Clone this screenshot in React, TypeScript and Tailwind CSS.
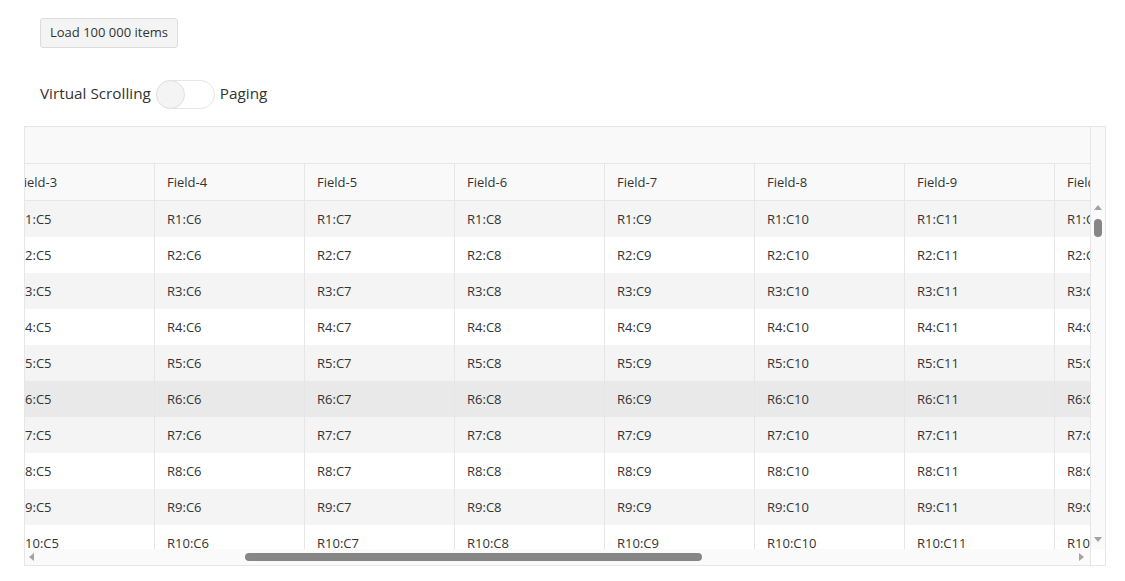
import React from 'react';

const columns = [3, 4, 5, 6, 7, 8, 9, 10];
const rows = [1, 2, 3, 4, 5, 6, 7, 8, 9, 10, 11];

export default function App() {
    return (
        <div className="min-h-screen bg-white pl-6 pr-[19px] pt-[18px] text-[#333]" style={{ fontFamily: '"Open Sans", "Noto Sans", sans-serif' }}>
            {/* Load button */}
            <div className="ml-4">
                <button className="h-[30px] px-[9px] rounded-[3px] border border-[#dcdcdc] bg-[#f4f4f4] text-[13px] text-[#333]">
                    Load 100 000 items
                </button>
            </div>

            {/* Switch row */}
            <div className="ml-4 mt-8 flex items-center gap-[5px] text-[15.3px]">
                <span className="-mt-[2px]">Virtual Scrolling</span>
                <div className="w-[59px] h-[29px] rounded-full border border-[#e6e6e6] bg-white flex items-center">
                    <div className="w-[29px] h-[29px] -ml-px rounded-full border border-[#e0e0e0] bg-[#f4f4f4]" />
                </div>
                <span className="-mt-[2px]">Paging</span>
            </div>

            {/* Grid */}
            <div className="mt-[17px] h-[440px] border border-[#e6e6e6] flex text-[13px] overflow-hidden">
                <div className="flex-1 flex flex-col min-w-0">
                    {/* toolbar */}
                    <div className="h-[37px] shrink-0 bg-[#f9f9f9] border-b border-[#e6e6e6]" />
                    {/* header */}
                    <div className="h-[37px] shrink-0 bg-[#f9f9f9] border-b border-[#e6e6e6] overflow-hidden">
                        <div className="flex -ml-[20px] h-full">
                            {columns.map((c) => (
                                <div key={c} className="w-[150px] shrink-0 border-r border-[#e6e6e6] px-3 pt-px flex items-center">
                                    Field-{c}
                                </div>
                            ))}
                        </div>
                    </div>
                    {/* body */}
                    <div className="flex-1 overflow-hidden">
                        {rows.map((r) => (
                            <div
                                key={r}
                                className={`flex -ml-[20px] h-9 ${r === 6 ? 'bg-[#e9e9e9]' : r % 2 === 1 ? 'bg-[#f4f4f4]' : 'bg-white'}`}
                            >
                                {columns.map((c) => (
                                    <div key={c} className="w-[150px] shrink-0 border-r border-[#e6e6e6] px-3 pt-px flex items-center whitespace-nowrap">
                                        R{r}:C{c + 2}
                                    </div>
                                ))}
                            </div>
                        ))}
                    </div>
                    {/* horizontal scrollbar */}
                    <div className="h-4 shrink-0 bg-[#fafafa] flex items-center px-1">
                        <div className="w-0 h-0 border-y-[4px] border-y-transparent border-r-[5px] border-r-[#a3a3a3]" />
                        <div className="ml-[211px] w-[457px] h-2 rounded-full bg-[#868686]" />
                        <div className="flex-1" />
                        <div className="mr-[2px] w-0 h-0 border-y-[4px] border-y-transparent border-l-[5px] border-l-[#a3a3a3]" />
                    </div>
                </div>

                {/* vertical scrollbar gutter */}
                <div className="w-[15px] shrink-0 flex flex-col border-l border-[#e6e6e6]">
                    <div className="h-[74px] shrink-0 bg-[#f9f9f9]" />
                    <div className="flex-1 bg-[#fafafa] flex flex-col items-center pt-[4px] pb-[7px]">
                        <div className="w-0 h-0 border-x-[4px] border-x-transparent border-b-[5px] border-b-[#a3a3a3]" />
                        <div className="mt-[9px] w-2 h-[18px] rounded-full bg-[#868686]" />
                        <div className="flex-1" />
                        <div className="w-0 h-0 border-x-[4px] border-x-transparent border-t-[5px] border-t-[#a3a3a3]" />
                    </div>
                    <div className="h-4 shrink-0 bg-white" />
                </div>
            </div>
        </div>
    );
}
